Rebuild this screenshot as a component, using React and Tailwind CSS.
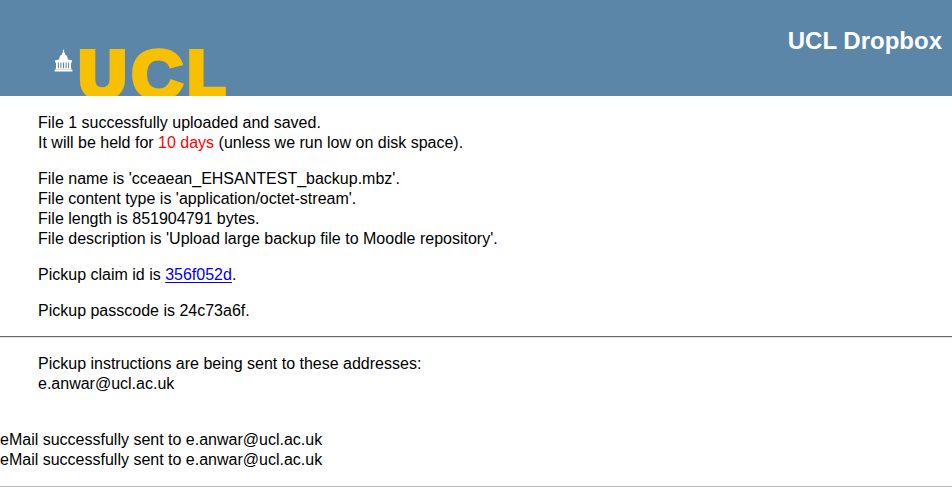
function PorticoIcon() {
  return (
    <svg className="mt-[49px] ml-[54px] h-[24px] w-[20px] shrink-0" viewBox="0 0 20 24" fill="#fff">
      <rect x="8.9" y="0.8" width="1.2" height="4" />
      <path d="M8 3.6h3v2.6H8z" />
      <path d="M5.2 11c0-3.7 1.8-5.9 4.3-5.9s4.3 2.2 4.3 5.9z" />
      <path d="M1 11.6 4.6 10.4h9.8l3.6 1.2v1.8H1z" />
      <path d="M2 13h1.9v7H2zM4.9 13h1.5v7H4.9zM7.4 13h1.5v7H7.4zM10.1 13h1.5v7h-1.5zM12.6 13h1.5v7h-1.5zM15.1 13H17v7h-1.9z" />
      <path d="M1.6 19.2h15.8v1.4H1.6zM.6 20.8h17.8v1.7H.6z" />
    </svg>
  );
}

function Logo() {
  return (
    <div className="flex h-24 overflow-hidden">
      <PorticoIcon />
      <svg className="h-24 w-[160px] shrink-0" viewBox="74 0 160 96">
        <g
          className="font-['Liberation_Sans',sans-serif] font-bold"
          fill="#f7c000"
          stroke="#f7c000"
        >
          <text className="text-[65px]" strokeWidth="6" transform="translate(79 97.3)">U</text>
          <text className="text-[69px]" strokeWidth="4.5" transform="translate(131.4 98.4) scale(1.03 1)">C</text>
          <text className="text-[65px]" strokeWidth="6" transform="translate(188 97.3) scale(.93 1)">L</text>
        </g>
      </svg>
    </div>
  );
}

export default function App() {
  return (
    <div className="h-[488px] w-[952px] overflow-hidden bg-white font-['Liberation_Sans',Arial,sans-serif] text-[16px] leading-5 text-black">
      <header className="flex h-24 justify-between bg-[#5b86a8]">
        <Logo />
        <h1 className="mt-[26px] mr-[10px] text-2xl leading-[30px] font-bold text-white">UCL Dropbox</h1>
      </header>
      <main>
        <div className="space-y-4 pt-[17px] pl-[38px] whitespace-nowrap">
          <p>
            File 1 successfully uploaded and saved.
            <br />
            It will be held for <span className="text-[#ff0000]">10 days</span> (unless we run low on disk space).
          </p>
          <p>
            File name is 'cceaean_EHSANTEST_backup.mbz'.
            <br />
            File content type is 'application/octet-stream'.
            <br />
            File length is 851904791 bytes.
            <br />
            File description is 'Upload large backup file to Moodle repository'.
          </p>
          <p>
            Pickup claim id is{" "}
            <a href="#" className="text-[#0000ee] underline underline-offset-[2px]">356f052d</a>.
          </p>
          <p>Pickup passcode is 24c73a6f.</p>
        </div>
        <hr className="mt-[15px] h-[2px] border-t border-b border-t-[#696969] border-b-[#e3e3e3]" />
        <p className="mt-4 pl-[38px]">
          Pickup instructions are being sent to these addresses:
          <br />
          e.anwar@ucl.ac.uk
        </p>
        <p className="mt-9">
          eMail successfully sent to e.anwar@ucl.ac.uk
          <br />
          eMail successfully sent to e.anwar@ucl.ac.uk
        </p>
        <hr className="mt-4 border-t border-t-[#bababa]" />
      </main>
    </div>
  );
}
